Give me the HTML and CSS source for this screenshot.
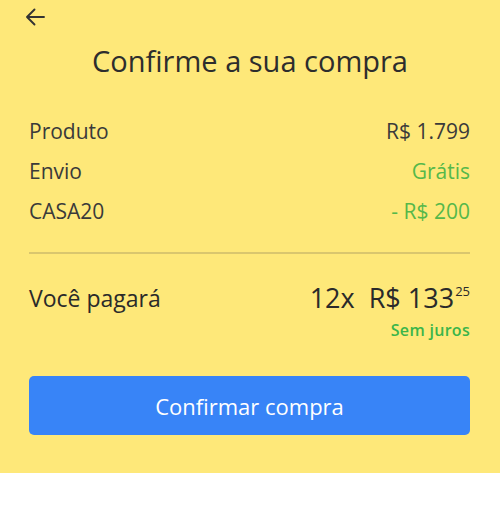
FILE: index.html
```html
<!DOCTYPE html>
<html lang="pt-BR">
<head>
<meta charset="utf-8">
<title>Confirme a sua compra</title>
<link rel="stylesheet" href="styles.css">
</head>
<body>
<main class="screen">
  <div class="topbar">
    <svg class="back" width="20" height="18" viewBox="0 0 20 18" aria-label="Voltar">
      <path d="M19 9H2M9.5 1.5L2 9l7.5 7.5" fill="none" stroke="#333" stroke-width="1.9" stroke-linecap="round" stroke-linejoin="round"/>
    </svg>
  </div>
  <h1 class="title">Confirme a sua compra</h1>
  <section class="details">
    <div class="row"><span>Produto</span><span>R$ 1.799</span></div>
    <div class="row"><span>Envio</span><span class="green">Grátis</span></div>
    <div class="row"><span>CASA20</span><span class="green">- R$ 200</span></div>
    <hr class="divider">
    <div class="total">
      <span class="total-label">Você pagará</span>
      <span class="total-value">12x&nbsp;&nbsp;R$ 133<sup class="cents">25</sup></span>
    </div>
    <div class="note">Sem juros</div>
    <button class="confirm">Confirmar compra</button>
  </section>
</main>
</body>
</html>
```
FILE: styles.css
```css
* { box-sizing: border-box; }
body {
  margin: 0;
  background: #fff;
  font-family: "Open Sans", "Noto Sans", sans-serif;
  color: #333;
}
.screen {
  background: #fee879;
  padding-bottom: 38px;
}
.topbar {
  height: 34px;
  padding-left: 25px;
  display: flex;
  align-items: center;
}
.back { display: block; }
.title {
  margin: 7px 0 0;
  font-size: 29px;
  line-height: 40px;
  font-weight: 400;
  text-align: center;
  color: #2d2d2d;
}
.details {
  padding: 0 30px 0 29px;
  margin-top: 30px;
}
.row {
  display: flex;
  justify-content: space-between;
  font-size: 21px;
  line-height: 40px;
  color: #3a3a3a;
}
.green { color: #56b84a; }
.divider {
  margin: 21px 0 0;
  border: 0;
  height: 2px;
  background: #d9c66e;
}
.total {
  margin-top: 28px;
  display: flex;
  justify-content: space-between;
  align-items: center;
  line-height: 32px;
}
.total-label {
  font-size: 23px;
  color: #2a2a2a;
}
.total-value {
  font-size: 27px;
  color: #2a2a2a;
}
.cents {
  font-size: 13px;
  vertical-align: 12px;
  line-height: 0;
  margin-left: 1px;
}
.note {
  margin-top: 6px;
  text-align: right;
  font-size: 16px;
  line-height: 20px;
  font-weight: 600;
  letter-spacing: 0.3px;
  color: #3bb54a;
}
.confirm {
  display: block;
  width: 100%;
  margin-top: 36px;
  height: 59px;
  border: 0;
  border-radius: 5px;
  background: #3884f7;
  color: #fff;
  font-family: inherit;
  font-size: 22px;
}
```
